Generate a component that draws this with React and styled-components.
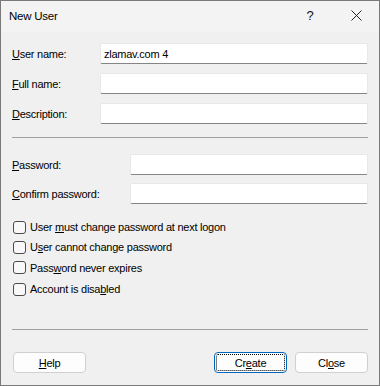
import React from "react";
import styled, { createGlobalStyle } from "styled-components";

const Global = createGlobalStyle`
  html, body { margin: 0; padding: 0; background: #f0f0f0; }
  body { font-family: "Liberation Sans", Arial, sans-serif; font-size: 11px; color: #000; }
  * { box-sizing: border-box; }
`;

const Window = styled.div`
  width: 380px;
  height: 386px;
  border: 1px solid #7a7a7a;
  background: #f0f0f0;
  display: flex;
  flex-direction: column;
  letter-spacing: -0.25px;
`;

const TitleBar = styled.div`
  height: 31px;
  display: flex;
  align-items: center;
  padding-left: 8px;
  background: #f3f3f3;
  font-size: 11.5px;
  padding-bottom: 2px;
`;

const Title = styled.div`
  flex: 1;
`;

const TitleButton = styled.div`
  width: 46px;
  height: 29px;
  display: flex;
  align-items: center;
  justify-content: center;
  font-size: 13px;
  color: #111;
`;

const Body = styled.div`
  flex: 1;
  display: flex;
  flex-direction: column;
  padding: 11px 11px 12px 11px;
`;

const FieldGrid = styled.div`
  display: grid;
  grid-template-columns: ${(p) => p.$label}px 1fr;
  row-gap: ${(p) => p.$gap}px;
  align-items: center;
`;

const Label = styled.label`
  white-space: nowrap;
`;

const Input = styled.div`
  height: 21px;
  background: #fff;
  border: 1px solid #e8e8e8;
  border-bottom: 1px solid #858585;
  border-radius: 2px;
  padding: 0 3px;
  display: flex;
  align-items: center;
  font-size: 11px;
`;

const Separator = styled.hr`
  border: none;
  border-top: 1px solid #a0a0a0;
  height: 0;
  margin: ${(p) => p.$top}px 0 ${(p) => p.$bottom}px 0;
  width: 100%;
`;

const Checks = styled.div`
  display: flex;
  flex-direction: column;
  margin-top: 13px;
`;

const CheckRow = styled.div`
  height: ${(p) => p.$h || 21}px;
  display: flex;
  align-items: center;
  gap: 4px;
`;

const Box = styled.span`
  width: 13px;
  height: 13px;
  border: 1px solid #4c4c4c;
  border-radius: 3px;
  background: #f8f8f8;
  flex: none;
  margin-left: 1px;
`;

const Footer = styled.div`
  display: flex;
  align-items: center;
  gap: 8px;
  margin-top: 22px;
  padding-left: 1px;
`;

const Spacer = styled.div`
  flex: 1;
`;

const Button = styled.button`
  width: 73px;
  height: 21px;
  font: inherit;
  letter-spacing: inherit;
  background: #fdfdfd;
  border: 1px solid ${(p) => (p.$primary ? "#0067c0" : "#d0d0d0")};
  border-radius: 4px;
  color: #000;
  padding: 0;
  outline: ${(p) => (p.$primary ? "1px dotted #000" : "none")};
  outline-offset: -3px;
`;

const U = styled.span`
  text-decoration: underline;
  text-underline-offset: 1px;
`;

const CloseIcon = () => (
  <svg width="11" height="11" viewBox="0 0 11 11">
    <path d="M0.5 0.5 L10.5 10.5 M10.5 0.5 L0.5 10.5" stroke="#222" strokeWidth="1" />
  </svg>
);

export default function App() {
  return (
    <>
      <Global />
      <Window>
        <TitleBar>
          <Title>New User</Title>
          <TitleButton>?</TitleButton>
          <TitleButton>
            <CloseIcon />
          </TitleButton>
        </TitleBar>
        <Body>
          <FieldGrid $label={88} $gap={9}>
            <Label>
              <U>U</U>ser name:
            </Label>
            <Input>zlamav.com 4</Input>
            <Label>
              <U>F</U>ull name:
            </Label>
            <Input />
            <Label>
              <U>D</U>escription:
            </Label>
            <Input />
          </FieldGrid>
          <Separator $top={13} $bottom={16} />
          <FieldGrid $label={118} $gap={8}>
            <Label>
              <U>P</U>assword:
            </Label>
            <Input />
            <Label>
              <U>C</U>onfirm password:
            </Label>
            <Input />
          </FieldGrid>
          <Checks>
            <CheckRow $h={20}>
              <Box />
              <span>
                User <U>m</U>ust change password at next logon
              </span>
            </CheckRow>
            <CheckRow $h={20}>
              <Box />
              <span>
                U<U>s</U>er cannot change password
              </span>
            </CheckRow>
            <CheckRow $h={21}>
              <Box />
              <span>
                Pass<U>w</U>ord never expires
              </span>
            </CheckRow>
            <CheckRow $h={22}>
              <Box />
              <span>
                Account is disa<U>b</U>led
              </span>
            </CheckRow>
          </Checks>
          <Separator $top={29} $bottom={0} />
          <Footer>
            <Button>
              <U>H</U>elp
            </Button>
            <Spacer />
            <Button $primary>
              Cr<U>e</U>ate
            </Button>
            <Button>
              Cl<U>o</U>se
            </Button>
          </Footer>
        </Body>
      </Window>
    </>
  );
}
